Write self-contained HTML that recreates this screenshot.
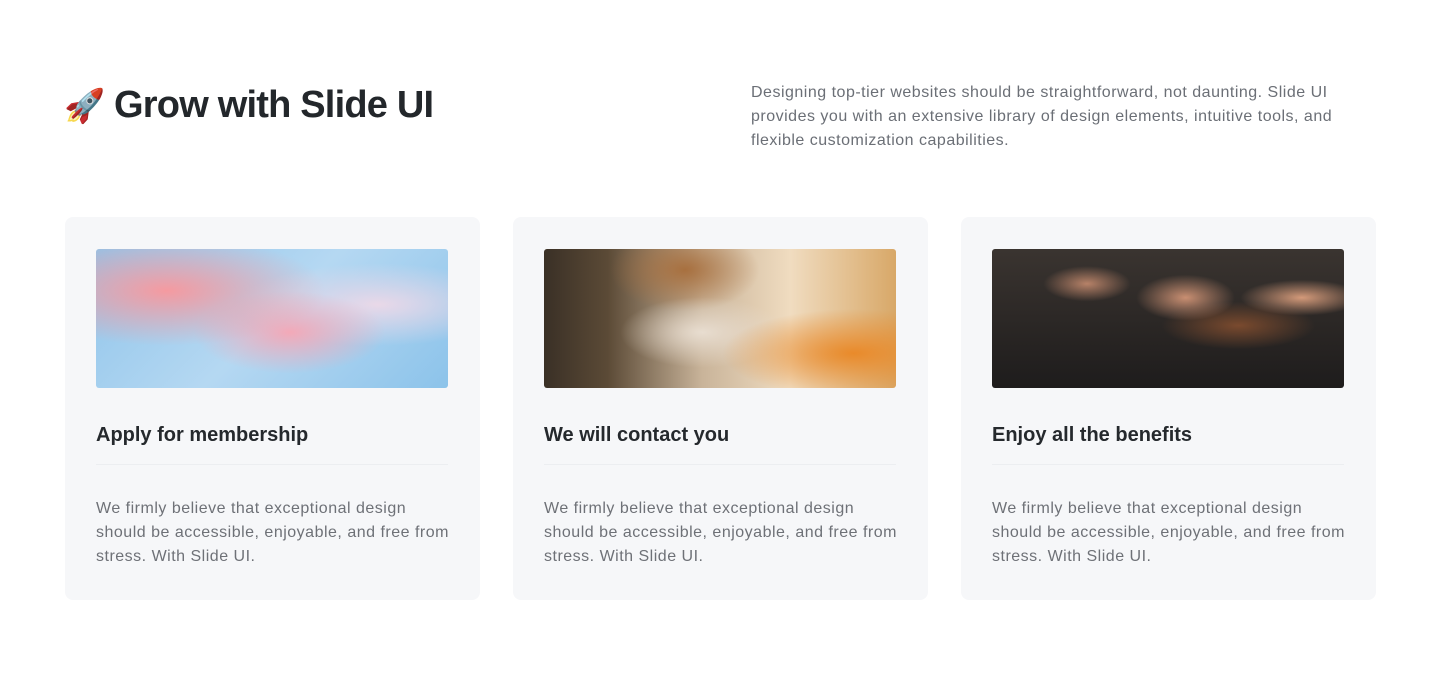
<!DOCTYPE html>
<html><head><meta charset="utf-8"><style>
*{margin:0;padding:0;box-sizing:border-box}
body{width:1440px;height:681px;background:#fff;font-family:"Liberation Sans",sans-serif;position:relative;overflow:hidden}
h1{position:absolute;left:64px;top:81px;font-size:38px;font-weight:700;color:#23272b;letter-spacing:-0.8px;line-height:48px}
.lead{position:absolute;left:751px;top:81px;width:592px;font-size:16px;line-height:24px;color:#6b6f76;letter-spacing:0.5px}
.card{position:absolute;top:217px;width:415px;height:383px;background:#f6f7f9;border-radius:8px}
.img{position:absolute;left:31px;top:32px;width:352px;height:139px;border-radius:3px}
.t{position:absolute;left:31px;top:204px;font-size:20px;font-weight:700;color:#25292d;line-height:28px}
.hr{position:absolute;left:31px;top:247px;width:352px;height:1px;background:#eceef1}
.p{position:absolute;left:31px;top:280px;width:360px;font-size:16px;line-height:24px;color:#6e7177;letter-spacing:0.5px}
</style></head><body>
<h1><span style="font-size:33px">🚀</span> Grow with Slide UI</h1>
<div class="lead">Designing top-tier websites should be straightforward, not daunting. Slide UI provides you with an extensive library of design elements, intuitive tools, and flexible customization capabilities.</div>

<div class="card" style="left:65px">
<div class="img" style="background:radial-gradient(ellipse at 20% 30%,#f59aa0 0,transparent 40%),radial-gradient(ellipse at 55% 60%,#f3a9b8 0,transparent 35%),radial-gradient(ellipse at 80% 40%,#e9d8e8 0,transparent 35%),linear-gradient(135deg,#8fc4ea,#b5d8f2 50%,#8cc3ea)"></div>
<div class="t">Apply for membership</div><div class="hr"></div>
<div class="p">We firmly believe that exceptional design should be accessible, enjoyable, and free from stress. With Slide UI.</div></div>

<div class="card" style="left:513px">
<div class="img" style="background:radial-gradient(ellipse at 88% 75%,#e98a2a 0,transparent 30%),radial-gradient(ellipse at 45% 60%,#e8ddd0 0,transparent 30%),radial-gradient(ellipse at 40% 15%,#a8703f 0,transparent 25%),linear-gradient(90deg,#3a3026 0,#5b4a36 18%,#c9b49a 45%,#f0dcc0 70%,#d8a868 100%)"></div>
<div class="t">We will contact you</div><div class="hr"></div>
<div class="p">We firmly believe that exceptional design should be accessible, enjoyable, and free from stress. With Slide UI.</div></div>

<div class="card" style="left:961px">
<div class="img" style="background:radial-gradient(ellipse at 55% 35%,#c98f72 0,transparent 18%),radial-gradient(ellipse at 88% 35%,#d49a7a 0,transparent 14%),radial-gradient(ellipse at 27% 25%,#b78268 0,transparent 12%),radial-gradient(ellipse at 70% 55%,#7a4a2e 0,transparent 22%),linear-gradient(180deg,#3a3430,#1e1c1c)"></div>
<div class="t">Enjoy all the benefits</div><div class="hr"></div>
<div class="p">We firmly believe that exceptional design should be accessible, enjoyable, and free from stress. With Slide UI.</div></div>
</body></html>
